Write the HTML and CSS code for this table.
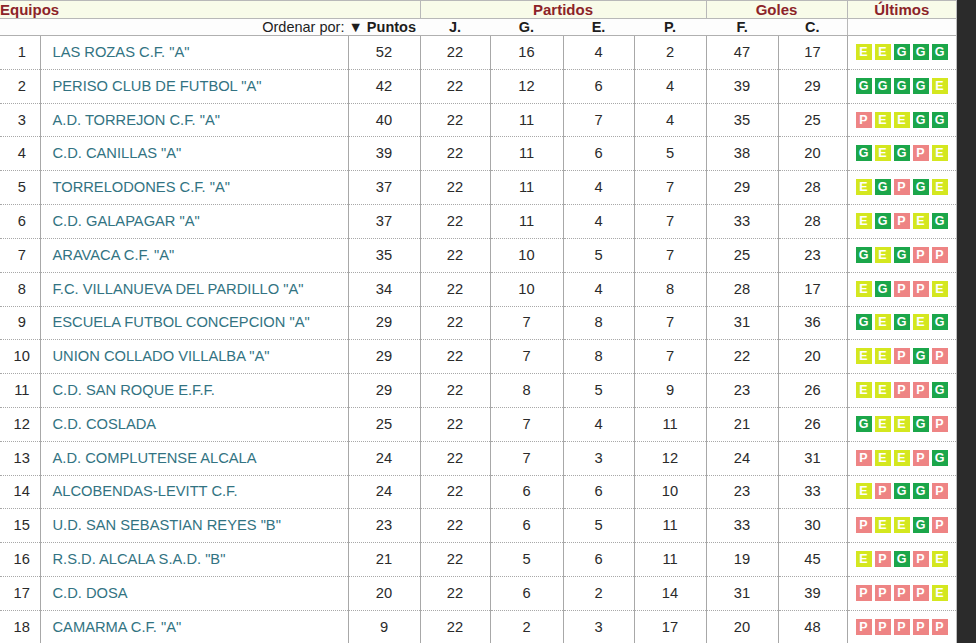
FILE: index.html
```html
<!DOCTYPE html>
<html lang="es">
<head>
<meta charset="utf-8">
<title>Clasificación</title>
<link rel="stylesheet" href="styles.css">
</head>
<body>
<div class="page">
<table class="standings">
<colgroup>
<col class="c-pos"><col class="c-team"><col class="c-pts"><col class="c-j"><col class="c-g"><col class="c-e"><col class="c-p"><col class="c-f"><col class="c-c"><col class="c-last">
</colgroup>
<thead>
<tr class="group">
<th colspan="3" class="left">Equipos</th>
<th colspan="4">Partidos</th>
<th colspan="2">Goles</th>
<th>Últimos</th>
</tr>
<tr class="sub">
<th colspan="3" class="right">Ordenar por: <b>▼ Puntos</b></th>
<th>J.</th><th>G.</th><th>E.</th><th>P.</th><th>F.</th><th>C.</th><th class="last"></th>
</tr>
</thead>
<tbody>
<tr><td>1</td><td class="team">LAS ROZAS C.F. "A"</td><td>52</td><td>22</td><td>16</td><td>4</td><td>2</td><td>47</td><td>17</td><td class="form"><span class="e">E</span><span class="e">E</span><span class="g">G</span><span class="g">G</span><span class="g">G</span></td></tr>
<tr><td>2</td><td class="team">PERISO CLUB DE FUTBOL "A"</td><td>42</td><td>22</td><td>12</td><td>6</td><td>4</td><td>39</td><td>29</td><td class="form"><span class="g">G</span><span class="g">G</span><span class="g">G</span><span class="g">G</span><span class="e">E</span></td></tr>
<tr><td>3</td><td class="team">A.D. TORREJON C.F. "A"</td><td>40</td><td>22</td><td>11</td><td>7</td><td>4</td><td>35</td><td>25</td><td class="form"><span class="p">P</span><span class="e">E</span><span class="e">E</span><span class="g">G</span><span class="g">G</span></td></tr>
<tr><td>4</td><td class="team">C.D. CANILLAS "A"</td><td>39</td><td>22</td><td>11</td><td>6</td><td>5</td><td>38</td><td>20</td><td class="form"><span class="g">G</span><span class="e">E</span><span class="g">G</span><span class="p">P</span><span class="e">E</span></td></tr>
<tr><td>5</td><td class="team">TORRELODONES C.F. "A"</td><td>37</td><td>22</td><td>11</td><td>4</td><td>7</td><td>29</td><td>28</td><td class="form"><span class="e">E</span><span class="g">G</span><span class="p">P</span><span class="g">G</span><span class="e">E</span></td></tr>
<tr><td>6</td><td class="team">C.D. GALAPAGAR "A"</td><td>37</td><td>22</td><td>11</td><td>4</td><td>7</td><td>33</td><td>28</td><td class="form"><span class="e">E</span><span class="g">G</span><span class="p">P</span><span class="e">E</span><span class="g">G</span></td></tr>
<tr><td>7</td><td class="team">ARAVACA C.F. "A"</td><td>35</td><td>22</td><td>10</td><td>5</td><td>7</td><td>25</td><td>23</td><td class="form"><span class="g">G</span><span class="e">E</span><span class="g">G</span><span class="p">P</span><span class="p">P</span></td></tr>
<tr><td>8</td><td class="team">F.C. VILLANUEVA DEL PARDILLO "A"</td><td>34</td><td>22</td><td>10</td><td>4</td><td>8</td><td>28</td><td>17</td><td class="form"><span class="e">E</span><span class="g">G</span><span class="p">P</span><span class="p">P</span><span class="e">E</span></td></tr>
<tr><td>9</td><td class="team">ESCUELA FUTBOL CONCEPCION "A"</td><td>29</td><td>22</td><td>7</td><td>8</td><td>7</td><td>31</td><td>36</td><td class="form"><span class="g">G</span><span class="e">E</span><span class="g">G</span><span class="e">E</span><span class="g">G</span></td></tr>
<tr><td>10</td><td class="team">UNION COLLADO VILLALBA "A"</td><td>29</td><td>22</td><td>7</td><td>8</td><td>7</td><td>22</td><td>20</td><td class="form"><span class="e">E</span><span class="e">E</span><span class="p">P</span><span class="g">G</span><span class="p">P</span></td></tr>
<tr><td>11</td><td class="team">C.D. SAN ROQUE E.F.F.</td><td>29</td><td>22</td><td>8</td><td>5</td><td>9</td><td>23</td><td>26</td><td class="form"><span class="e">E</span><span class="e">E</span><span class="p">P</span><span class="p">P</span><span class="g">G</span></td></tr>
<tr><td>12</td><td class="team">C.D. COSLADA</td><td>25</td><td>22</td><td>7</td><td>4</td><td>11</td><td>21</td><td>26</td><td class="form"><span class="g">G</span><span class="e">E</span><span class="e">E</span><span class="g">G</span><span class="p">P</span></td></tr>
<tr><td>13</td><td class="team">A.D. COMPLUTENSE ALCALA</td><td>24</td><td>22</td><td>7</td><td>3</td><td>12</td><td>24</td><td>31</td><td class="form"><span class="p">P</span><span class="e">E</span><span class="e">E</span><span class="p">P</span><span class="g">G</span></td></tr>
<tr><td>14</td><td class="team">ALCOBENDAS-LEVITT C.F.</td><td>24</td><td>22</td><td>6</td><td>6</td><td>10</td><td>23</td><td>33</td><td class="form"><span class="e">E</span><span class="p">P</span><span class="g">G</span><span class="g">G</span><span class="p">P</span></td></tr>
<tr><td>15</td><td class="team">U.D. SAN SEBASTIAN REYES "B"</td><td>23</td><td>22</td><td>6</td><td>5</td><td>11</td><td>33</td><td>30</td><td class="form"><span class="p">P</span><span class="e">E</span><span class="e">E</span><span class="g">G</span><span class="p">P</span></td></tr>
<tr><td>16</td><td class="team">R.S.D. ALCALA S.A.D. "B"</td><td>21</td><td>22</td><td>5</td><td>6</td><td>11</td><td>19</td><td>45</td><td class="form"><span class="e">E</span><span class="p">P</span><span class="g">G</span><span class="p">P</span><span class="e">E</span></td></tr>
<tr><td>17</td><td class="team">C.D. DOSA</td><td>20</td><td>22</td><td>6</td><td>2</td><td>14</td><td>31</td><td>39</td><td class="form"><span class="p">P</span><span class="p">P</span><span class="p">P</span><span class="p">P</span><span class="e">E</span></td></tr>
<tr><td>18</td><td class="team">CAMARMA C.F. "A"</td><td>9</td><td>22</td><td>2</td><td>3</td><td>17</td><td>20</td><td>48</td><td class="form"><span class="p">P</span><span class="p">P</span><span class="p">P</span><span class="p">P</span><span class="p">P</span></td></tr>
</tbody>
</table>
</div>
</body>
</html>
```
FILE: styles.css
```css
html, body {
  margin: 0;
  padding: 0;
}
body {
  background: #2b2b2b;
  font-family: "Liberation Sans", Arial, sans-serif;
  height: 643px;
  overflow: hidden;
}
.page {
  width: 956px;
  background: #ffffff;
  border-right: 1px solid #bdbdbd;
  min-height: 643px;
}
.standings {
  border-collapse: collapse;
  table-layout: fixed;
  width: 956px;
  font-size: 14.7px;
  color: #2b2b2b;
}
.c-pos { width: 40px; }
.c-team { width: 308px; }
.c-pts { width: 72px; }
.c-j { width: 70px; }
.c-g { width: 73px; }
.c-e { width: 71px; }
.c-p { width: 72px; }
.c-f { width: 72px; }
.c-c { width: 69px; }
.c-last { width: 109px; }

.group th {
  height: 17px;
  padding: 0;
  background: #f8fbe9;
  color: #8c2328;
  font-size: 15px;
  font-weight: bold;
  text-align: center;
  border-top: 1px solid #b8b8b8;
  border-bottom: 1px solid #b8b8b8;
  border-left: 1px solid #b8b8b8;
  line-height: 16px;
}
.group th.left {
  text-align: left;
  border-left: none;
}
.sub th {
  height: 16px;
  padding: 0;
  background: #fdfdfd;
  font-weight: bold;
  color: #1e1e1e;
  font-size: 14.5px;
  text-align: center;
  border-bottom: 1px solid #b0b0b0;
  line-height: 15px;
}
.sub th.right {
  text-align: right;
  font-weight: normal;
  padding-right: 4px;
}
.sub th.right b {
  font-weight: bold;
}
.sub th.last {
  border-left: 1px solid #b8b8b8;
}
tbody td {
  height: 32.82px;
  padding: 0;
  text-align: center;
  border-left: 1px solid #a8a8a8;
  border-bottom: 1px dotted #a8a8a8;
  color: #2a2a2a;
  line-height: 17px;
}
tbody td:first-child {
  border-left: none;
  padding-left: 4px;
}
tbody td.team {
  text-align: left;
  padding-left: 12px;
  color: #327382;
}
.form {
  text-align: left !important;
  padding-left: 8px !important;
  white-space: nowrap;
  font-size: 0;
}
.form span {
  display: inline-block;
  width: 16px;
  height: 16px;
  margin-right: 3px;
  font-size: 12.5px;
  line-height: 16px;
  font-weight: bold;
  color: #ffffff;
  text-align: center;
  vertical-align: middle;
}
.form .g { background: #1ba64a; }
.form .e { background: #d4e71f; }
.form .p { background: #ee8484; }
```
